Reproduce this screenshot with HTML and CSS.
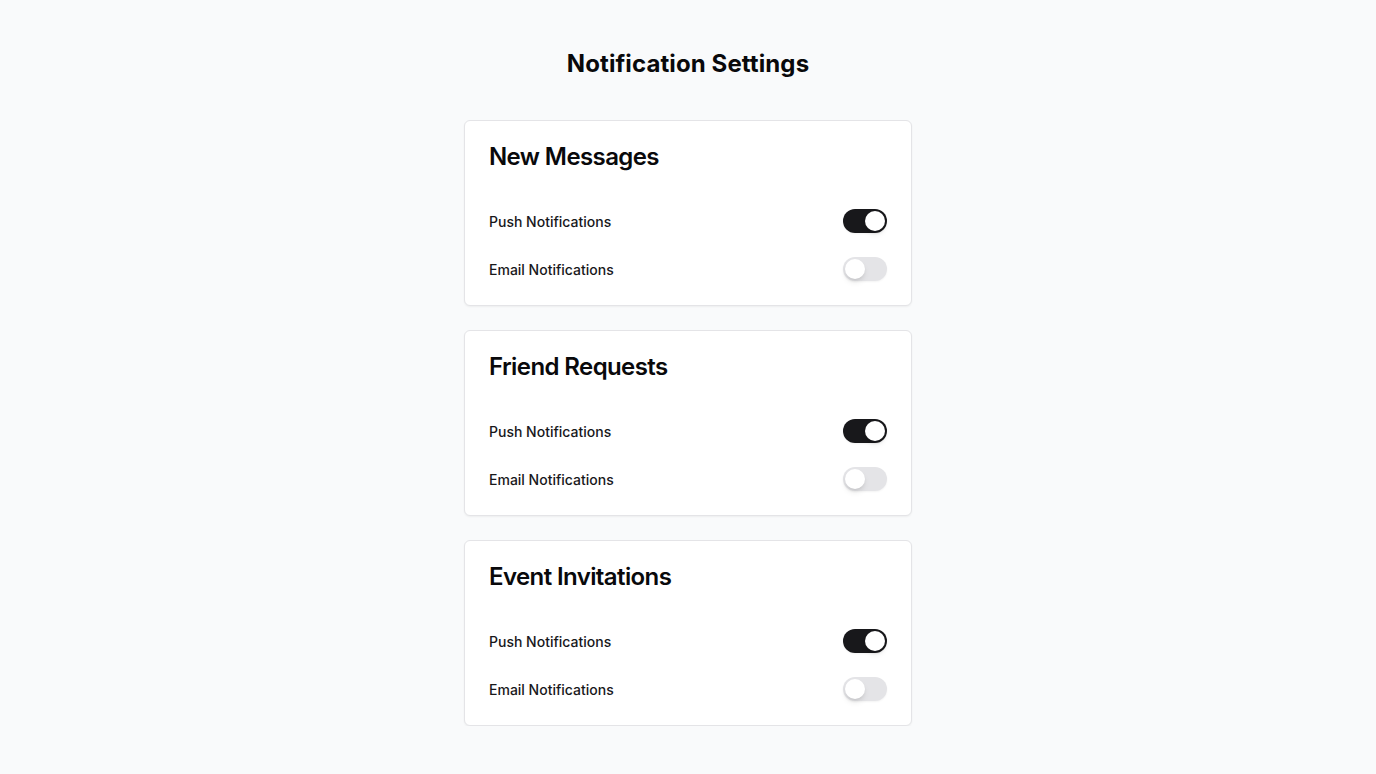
FILE: index.html
```html
<!DOCTYPE html>
<html lang="en">
<head>
<meta charset="utf-8">
<title>Notification Settings</title>
<link rel="stylesheet" href="styles.css">
</head>
<body>
<main class="page">
  <h1 class="page-title">Notification Settings</h1>
  <div class="cards">
    <section class="card">
      <h2 class="card-title">New Messages</h2>
      <div class="card-content">
        <div class="row"><span class="label">Push Notifications</span><span class="switch on"><span class="thumb"></span></span></div>
        <div class="row"><span class="label">Email Notifications</span><span class="switch"><span class="thumb"></span></span></div>
      </div>
    </section>
    <section class="card">
      <h2 class="card-title">Friend Requests</h2>
      <div class="card-content">
        <div class="row"><span class="label">Push Notifications</span><span class="switch on"><span class="thumb"></span></span></div>
        <div class="row"><span class="label">Email Notifications</span><span class="switch"><span class="thumb"></span></span></div>
      </div>
    </section>
    <section class="card">
      <h2 class="card-title">Event Invitations</h2>
      <div class="card-content">
        <div class="row"><span class="label">Push Notifications</span><span class="switch on"><span class="thumb"></span></span></div>
        <div class="row"><span class="label">Email Notifications</span><span class="switch"><span class="thumb"></span></span></div>
      </div>
    </section>
  </div>
</main>
</body>
</html>
```

FILE: styles.css
```css
* { box-sizing: border-box; }
html, body { margin: 0; padding: 0; }
body {
  background: #f9fafb;
  font-family: Inter, "Noto Sans", sans-serif;
  color: #09090b;
}
.page {
  display: flex;
  flex-direction: column;
  align-items: center;
  padding-top: 48px;
}
.page-title {
  margin: 0 0 40px;
  font-size: 24px;
  line-height: 32px;
  font-weight: 700;
  letter-spacing: 0.1px;
}
.cards {
  width: 448px;
  display: flex;
  flex-direction: column;
  gap: 24px;
}
.card {
  background: #fff;
  border: 1px solid #e4e4e7;
  border-radius: 6px;
  box-shadow: 0 1px 2px rgba(0,0,0,0.05);
}
.card-title {
  margin: 0;
  padding: 24px 24px 24px;
  font-size: 24px;
  line-height: 24px;
  font-weight: 600;
  letter-spacing: -0.6px;
}
.card-content {
  display: flex;
  flex-direction: column;
  gap: 24px;
  padding: 16px 24px 24px;
}
.row {
  display: flex;
  justify-content: space-between;
  align-items: center;
  height: 24px;
}
.label {
  font-size: 14px;
  font-weight: 500;
  color: #18181b;
}
.switch {
  width: 44px;
  height: 24px;
  border-radius: 12px;
  background: #e4e4e7;
  border: 2px solid transparent;
  display: flex;
  align-items: center;
  box-shadow: 0 1px 2px rgba(0,0,0,0.05);
}
.switch.on { background: #18181b; }
.thumb {
  width: 20px;
  height: 20px;
  border-radius: 50%;
  background: #fff;
  box-shadow: 0 4px 6px -1px rgba(0,0,0,0.1), 0 2px 4px -2px rgba(0,0,0,0.1);
}
.switch.on .thumb { margin-left: 20px; }
```
